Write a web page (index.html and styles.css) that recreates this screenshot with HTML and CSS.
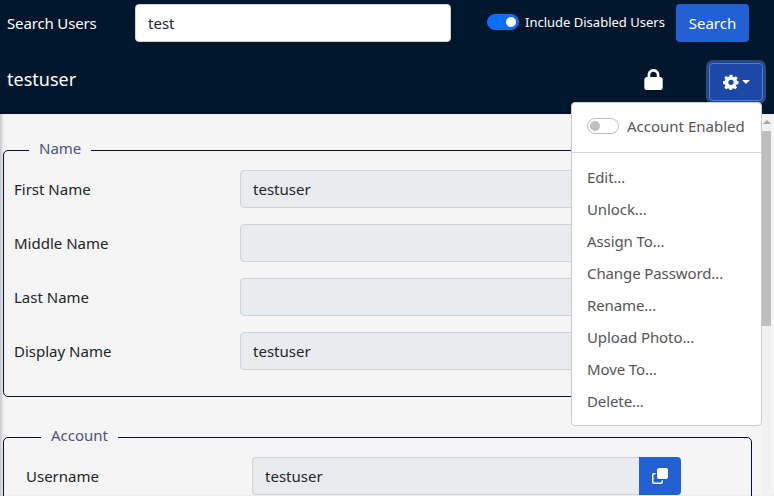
FILE: index.html
```html
<!DOCTYPE html>
<html lang="en">
<head>
<meta charset="UTF-8" />
<title>Users</title>
<link rel="stylesheet" href="styles.css">
</head>
<body>
  <header class="topbar">
    <form class="search-row">
      <label class="search-label">Search Users</label>
      <input class="search-input" type="text" value="test" />
      <div class="include-disabled">
        <span class="switch on"></span>
        <span>Include Disabled Users</span>
      </div>
      <button type="button" class="btn">Search</button>
    </form>
    <div class="user-row">
      <span class="user-name">testuser</span>
      <svg class="lock" viewBox="0 0 448 512"><path fill="#fff" d="M144 144v48h160v-48c0-44.200-35.800-80-80-80s-80 35.800-80 80zM80 192v-48C80 64.500 144.500 0 224 0s144 64.500 144 144v48h16c35.300 0 64 28.700 64 64v192c0 35.300-28.700 64-64 64H64c-35.300 0-64-28.700-64-64V256c0-35.300 28.700-64 64-64h16z"/></svg>
      <button type="button" class="gear-btn">
        <svg class="gear" viewBox="0 0 24 24"><path fill="#fff" fill-rule="evenodd" d="M10 1h4l.7 3.100 1.900.8 2.700-1.700 2.800 2.800-1.700 2.700.8 1.900L23.300 11v3.900l-3.100.7-.8 1.900 1.700 2.700-2.800 2.800-2.700-1.700-1.900.8-.7 3H10l-.7-3-1.900-.8-2.700 1.700-2.800-2.800 1.700-2.700-.8-1.900-3.100-.7V11l3.100-.7.800-1.900-1.700-2.700 2.800-2.800 2.700 1.700 1.900-.8zM12 8.500a4 4 0 1 0 0 8 4 4 0 0 0 0-8z"/></svg>
        <span class="caret"></span>
      </button>
    </div>
  </header>

  <main class="content">
    <fieldset class="group">
      <legend>Name</legend>
      <div class="field"><label>First Name</label><input type="text" value="testuser" disabled /></div>
      <div class="field"><label>Middle Name</label><input type="text" disabled /></div>
      <div class="field"><label>Last Name</label><input type="text" disabled /></div>
      <div class="field"><label>Display Name</label><input type="text" value="testuser" disabled /></div>
    </fieldset>
    <fieldset class="group account">
      <legend>Account</legend>
      <div class="field">
        <label>Username</label>
        <div class="input-group">
          <input type="text" value="testuser" disabled />
          <button type="button" class="copy-btn">
            <svg viewBox="0 0 16 16" width="16" height="16"><path fill="#fff" d="M7 0h7a2 2 0 0 1 2 2v7a2 2 0 0 1-2 2H7a2 2 0 0 1-2-2V2a2 2 0 0 1 2-2z"/><path fill="#fff" d="M2 5h1.500v1.500H2a.5.5 0 0 0-.5.5v7a.5.5 0 0 0 .5.5h7a.5.5 0 0 0 .5-.5v-1.500H11V14a2 2 0 0 1-2 2H2a2 2 0 0 1-2-2V7a2 2 0 0 1 2-2z"/></svg>
          </button>
        </div>
      </div>
    </fieldset>
  </main>

  <div class="scrollbar"><span class="arrow"></span><span class="thumb"></span></div>

  <div class="menu">
    <div class="menu-toggle">
      <span class="switch"></span>
      <span>Account Enabled</span>
    </div>
    <hr />
    <a>Edit...</a>
    <a>Unlock...</a>
    <a>Assign To...</a>
    <a>Change Password...</a>
    <a>Rename...</a>
    <a>Upload Photo...</a>
    <a>Move To...</a>
    <a>Delete...</a>
  </div>
</body>
</html>
```

FILE: styles.css
```css
* { box-sizing: border-box; }

html, body {
  margin: 0;
  height: 100%;
  overflow: hidden;
}

body {
  font-family: "Noto Sans", "Open Sans", sans-serif;
  font-size: 15px;
  color: #212529;
  background: #f5f5f5;
  position: relative;
}

.topbar {
  background: #00162d;
  color: #fff;
  height: 114px;
  padding: 4px 25px 0 7px;
}

.search-row {
  display: flex;
  align-items: center;
  height: 38px;
}

.search-label {
  flex: none;
  width: 128px;
  letter-spacing: -0.15px;
}

.search-input {
  flex: none;
  width: 316px;
  height: 38px;
  padding: 0 12px;
  font: inherit;
  color: #212529;
  border: 1px solid #ced4da;
  border-radius: 4px;
}

.include-disabled {
  display: flex;
  align-items: center;
  gap: 6px;
  margin-left: 36px;
  margin-top: -3px;
  font-size: 13px;
  white-space: nowrap;
}

.btn {
  flex: none;
  margin-left: auto;
  width: 73px;
  height: 38px;
  font: inherit;
  color: #fff;
  background: #2260d4;
  border: none;
  border-radius: 4px;
}

.switch {
  display: block;
  flex: none;
  width: 32px;
  height: 16px;
  border-radius: 8px;
  border: 1px solid #bfbfbf;
  background: #fff;
  position: relative;
}

.switch::after {
  content: "";
  position: absolute;
  left: 2px;
  top: 2px;
  width: 10px;
  height: 10px;
  border-radius: 50%;
  background: #bfbfbf;
}

.switch.on {
  background: #0d6efd;
  border-color: #0d6efd;
}

.switch.on::after {
  left: 18px;
  background: #fff;
}

.user-row {
  display: flex;
  align-items: center;
  height: 54px;
  margin-top: 10px;
  margin-right: -14px;
}

.user-name {
  font-size: 18px;
  flex: 1;
}

.lock {
  width: 19px;
  height: 21px;
  margin-right: 46px;
}

.gear-btn {
  align-self: flex-start;
  margin-top: 11px;
  width: 54px;
  height: 38px;
  display: flex;
  align-items: center;
  justify-content: center;
  gap: 3px;
  background: #1c48a8;
  border: 1px solid #4a7fe0;
  border-radius: 4px;
  box-shadow: 0 0 0 3px #264a80;
}

.gear { width: 16px; height: 16px; }

.caret {
  border-top: 4px solid #fff;
  border-left: 4px solid transparent;
  border-right: 4px solid transparent;
}

.content {
  padding: 24px 0 0 3px;
  height: 382px;
  overflow: hidden;
  box-shadow: inset 3px 0 3px -1px #c4c4c4;
}

.group {
  margin: 0 11px 28px 0;
  padding: 0 10px;
  height: 259px;
  border: 1px solid #00162d;
  border-radius: 5px;
}

.group legend {
  margin-left: 15px;
  padding: 0 10px 4px;
  color: #4a5578;
}

.group.account {
  margin-right: 22px;
  padding: 0 22px;
}

.field {
  display: flex;
  align-items: center;
  height: 38px;
  margin-bottom: 16px;
}

.group legend + .field { margin-top: 8px; }

.field label { width: 226px; flex: none; }

.field input {
  flex: 1;
  height: 38px;
  min-width: 0;
  padding: 0 12px;
  font: inherit;
  color: #212529;
  background: #e9ecef;
  border: 1px solid #ced4da;
  border-radius: 4px;
}

.input-group {
  display: flex;
  width: 429px;
}

.input-group input {
  border-radius: 4px 0 0 4px;
  border-right: none;
}

.copy-btn {
  width: 42px;
  height: 38px;
  display: flex;
  align-items: center;
  justify-content: center;
  padding: 0;
  background: #2260d4;
  border: none;
  border-radius: 0 4px 4px 0;
}

.scrollbar {
  position: absolute;
  top: 114px;
  right: 3px;
  bottom: 0;
  width: 9px;
  background: #f1f1f1;
}

.scrollbar .thumb {
  position: absolute;
  top: 17px;
  left: 0;
  right: 0;
  height: 195px;
  background: #bfbfbf;
}

.scrollbar .arrow {
  position: absolute;
  top: 6px;
  left: 1px;
  border-bottom: 4px solid #a3a3a3;
  border-left: 4px solid transparent;
  border-right: 4px solid transparent;
}

.menu {
  position: absolute;
  top: 102px;
  left: 571px;
  width: 191px;
  height: 324px;
  padding-top: 7px;
  color: #212529;
  background: #fff;
  border: 1px solid #ccc;
  border-radius: 4px;
}

.menu-toggle {
  display: flex;
  align-items: center;
  gap: 8px;
  height: 32px;
  padding-left: 15px;
  color: #555;
}

.menu hr {
  margin: 10px 0 8px;
  border: none;
  border-top: 1px solid #d8d8d8;
}

.menu a {
  display: block;
  height: 32px;
  line-height: 32px;
  padding-left: 15px;
  color: #555;
  letter-spacing: -0.1px;
}
```
